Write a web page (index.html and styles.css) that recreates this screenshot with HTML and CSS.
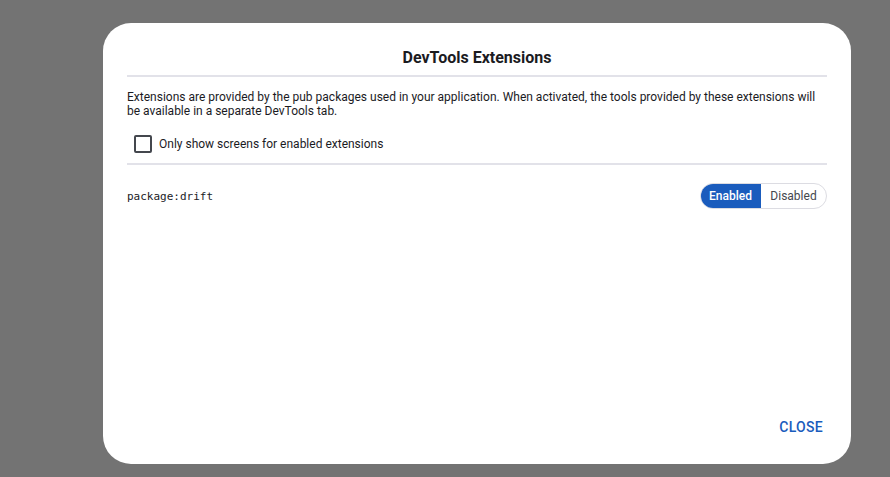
FILE: index.html
```html
<!DOCTYPE html>
<html>
<head>
<meta charset="utf-8">
<link rel="stylesheet" href="styles.css">
</head>
<body>
<div class="dialog">
  <h1 class="title">DevTools Extensions</h1>
  <div class="divider"></div>
  <p class="desc">Extensions are provided by the pub packages used in your application. When activated, the tools provided by these extensions will be available in a separate DevTools tab.</p>
  <label class="check-row">
    <span class="checkbox"></span>
    <span class="check-label">Only show screens for enabled extensions</span>
  </label>
  <div class="divider"></div>
  <div class="ext-row">
    <span class="pkg">package:drift</span>
    <div class="toggle">
      <span class="seg seg-on">Enabled</span>
      <span class="seg seg-off">Disabled</span>
    </div>
  </div>
  <div class="spacer"></div>
  <div class="actions">
    <button class="close">CLOSE</button>
  </div>
</div>
</body>
</html>
```
FILE: styles.css
```css
html, body {
  margin: 0;
  padding: 0;
  height: 100%;
}
body {
  background: #737373;
  font-family: Roboto, "Noto Sans", sans-serif;
  padding: 23px 0 0 103px;
  box-sizing: border-box;
}
.dialog {
  width: 748px;
  height: 441px;
  background: #ffffff;
  border-radius: 28px;
  box-sizing: border-box;
  padding: 25px 24px 24px 24px;
  display: flex;
  flex-direction: column;
}
.title {
  margin: 0;
  font-size: 16px;
  font-weight: 700;
  line-height: 20px;
  text-align: center;
  color: #1b1b1f;
}
.divider {
  height: 2px;
  background: #e2e2e9;
  margin-top: 7px;
}
.divider-2 {
  margin-top: 8px;
}
.desc {
  margin: 13px 0 0 0;
  font-size: 12px;
  line-height: 14px;
  color: #1b1b1f;
  width: 700px;
}
.check-row {
  display: flex;
  align-items: center;
  height: 18px;
  margin-top: 17px;
  margin-bottom: 3px;
}
.checkbox {
  width: 14px;
  height: 14px;
  border: 2px solid #44474e;
  border-radius: 2px;
  margin-left: 7px;
}
.check-label {
  margin-left: 7px;
  font-size: 12px;
  color: #1b1b1f;
}
.ext-row {
  display: flex;
  align-items: center;
  justify-content: space-between;
  margin-top: 18px;
}
.pkg {
  font-family: "DejaVu Sans Mono", monospace;
  font-size: 11px;
  color: #1b1b1f;
}
.toggle {
  display: flex;
  height: 26px;
  border: 1px solid #dcdce2;
  border-radius: 13px;
  overflow: hidden;
  box-sizing: border-box;
}
.seg {
  display: flex;
  align-items: center;
  justify-content: center;
  font-size: 12px;
}
.seg-on {
  width: 61px;
  background: #1a5cbd;
  color: #ffffff;
  font-weight: 500;
  margin: -1px 0 -1px -1px;
  border-radius: 13px 0 0 13px;
}
.seg-off {
  width: 65px;
  color: #44474e;
}
.spacer {
  flex: 1;
}
.actions {
  display: flex;
  justify-content: flex-end;
}
.close {
  background: none;
  border: none;
  font-family: Roboto, sans-serif;
  font-size: 14px;
  font-weight: 500;
  color: #1a5cbd;
  letter-spacing: 0.3px;
  padding: 0 4px;
  height: 26px;
  margin-bottom: 0;
}
```
